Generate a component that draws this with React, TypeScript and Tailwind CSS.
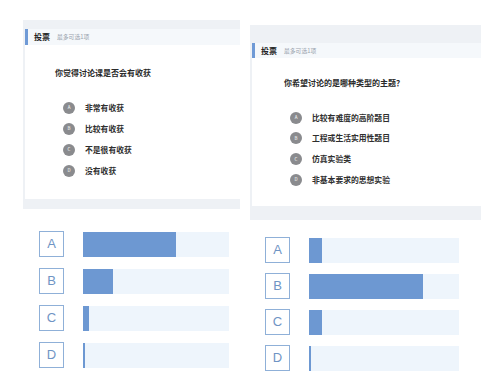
import React from "react";

const font = { fontFamily: '"Noto Sans CJK SC", "Noto Sans", sans-serif' };

interface PollCardProps {
  question: string;
  options: string[];
  topPad: string;
  headerH: string;
  bodyH: string;
  qTop: string;
  qLeft: string;
  optGap: string;
  footH: string;
  width: string;
}

const letters = ["A", "B", "C", "D"];

const PollCard: React.FC<PollCardProps> = ({
  question,
  options,
  topPad,
  headerH,
  bodyH,
  qTop,
  qLeft,
  optGap,
  footH,
  width,
}) => {
  return (
    <div className={`${width} bg-[#eef1f5] ${topPad} pl-[2px]`} style={font}>
      <div className={`${headerH} bg-[#f5f8fb] flex items-center`}>
        <div className="w-[3px] h-full bg-[#6f9ad6] mr-[6px]" />
        <span className="text-[8px] font-bold text-[#222] leading-none">
          投票
        </span>
        <span className="text-[5.8px] text-[#9aa3ad] ml-[7px] leading-none">
          最多可选1项
        </span>
      </div>
      <div className={`${bodyH} bg-white ${qTop}`}>
        <div
          className={`${qLeft} text-[8px] font-bold text-[#2a2a2a] leading-[14px]`}
        >
          {question}
        </div>
        <div className={`flex flex-col ${optGap} mt-[21px] ml-[38px]`}>
          {options.map((o, i) => (
            <div key={o} className="flex items-center h-[13px]">
              <div className="w-[12px] h-[12px] rounded-full bg-[#8a8b8e] flex items-center justify-center text-[4.5px] text-white">
                {letters[i]}
              </div>
              <span className="ml-[10px] text-[7.8px] font-bold text-[#2e2e2e] leading-none">
                {o}
              </span>
            </div>
          ))}
        </div>
      </div>
      <div className={`${footH}`} />
    </div>
  );
};

interface ChartProps {
  values: number[];
  barW: number;
  gap: string;
}

const Chart: React.FC<ChartProps> = ({ values, barW, gap }) => {
  return (
    <div className={`flex flex-col ${gap}`}>
      {values.map((v, i) => (
        <div key={i} className="flex items-center">
          <div
            className="w-[25px] h-[26px] border border-[#8fb0d8] flex items-center justify-center text-[13px] text-[#6f94c4]"
            style={{ fontFamily: '"Liberation Sans", Arial, sans-serif' }}
          >
            {letters[i]}
          </div>
          <div
            className="ml-[19px] h-[25px] bg-[#eef5fc]"
            style={{ width: barW }}
          >
            <div className="h-full bg-[#6d98d2]" style={{ width: v }} />
          </div>
        </div>
      ))}
    </div>
  );
};

export default function App() {
  return (
    <div className="w-[504px] h-[384px] bg-white flex overflow-hidden">
      <div className="w-[248px] shrink-0 flex flex-col">
        <div className="ml-[23px] mt-[20px]">
          <PollCard
            width="w-[217px]"
            topPad="pt-[9px]"
            headerH="h-[16px]"
            bodyH="h-[154px]"
            qTop="pt-[21px]"
            qLeft="ml-[30px]"
            optGap="gap-[8px]"
            footH="h-[10px]"
            question="你觉得讨论课是否会有收获"
            options={["非常有收获", "比较有收获", "不是很有收获", "没有收获"]}
          />
        </div>
        <div className="ml-[39px] mt-[22px]">
          <Chart values={[93, 30, 6, 2]} barW={146} gap="gap-[11px]" />
        </div>
      </div>
      <div className="w-[256px] shrink-0 flex flex-col">
        <div className="ml-[2px] mt-[25px]">
          <PollCard
            width="w-[231px]"
            topPad="pt-[18px]"
            headerH="h-[15px]"
            bodyH="h-[148px]"
            qTop="pt-[18px]"
            qLeft="ml-[32px]"
            optGap="gap-[7.7px]"
            footH="h-[14px]"
            question="你希望讨论的是哪种类型的主题？"
            options={[
              "比较有难度的高阶题目",
              "工程或生活实用性题目",
              "仿真实验类",
              "非基本要求的思想实验",
            ]}
          />
        </div>
        <div className="ml-[17px] mt-[17px]">
          <Chart values={[13, 114, 13, 2]} barW={150} gap="gap-[10px]" />
        </div>
      </div>
    </div>
  );
}
